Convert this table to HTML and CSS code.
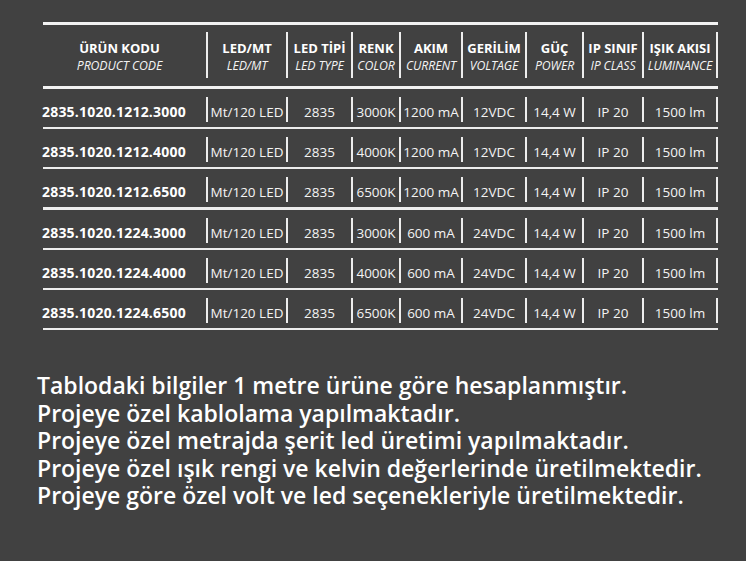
FILE: index.html
```html
<!DOCTYPE html>
<html lang="tr">
<head>
<meta charset="utf-8">
<title>LED Tablo</title>
<link rel="stylesheet" href="styles.css">
</head>
<body>
<div class="sheet">
  <div class="table">
    <div class="row head">
      <div class="cell code"><b>ÜRÜN KODU</b><i>PRODUCT CODE</i></div>
      <div class="cell"><b>LED/MT</b><i>LED/MT</i></div>
      <div class="cell"><b>LED TİPİ</b><i>LED TYPE</i></div>
      <div class="cell"><b>RENK</b><i>COLOR</i></div>
      <div class="cell"><b>AKIM</b><i>CURRENT</i></div>
      <div class="cell"><b>GERİLİM</b><i>VOLTAGE</i></div>
      <div class="cell"><b>GÜÇ</b><i>POWER</i></div>
      <div class="cell"><b>IP SINIF</b><i>IP CLASS</i></div>
      <div class="cell last"><b>IŞIK AKISI</b><i>LUMINANCE</i></div>
    </div>
    <div class="row">
      <div class="cell code">2835.1020.1212.3000</div>
      <div class="cell">Mt/120 LED</div>
      <div class="cell">2835</div>
      <div class="cell">3000K</div>
      <div class="cell">1200 mA</div>
      <div class="cell">12VDC</div>
      <div class="cell">14,4 W</div>
      <div class="cell">IP 20</div>
      <div class="cell last">1500 lm</div>
    </div>
    <div class="row">
      <div class="cell code">2835.1020.1212.4000</div>
      <div class="cell">Mt/120 LED</div>
      <div class="cell">2835</div>
      <div class="cell">4000K</div>
      <div class="cell">1200 mA</div>
      <div class="cell">12VDC</div>
      <div class="cell">14,4 W</div>
      <div class="cell">IP 20</div>
      <div class="cell last">1500 lm</div>
    </div>
    <div class="row group-end">
      <div class="cell code">2835.1020.1212.6500</div>
      <div class="cell">Mt/120 LED</div>
      <div class="cell">2835</div>
      <div class="cell">6500K</div>
      <div class="cell">1200 mA</div>
      <div class="cell">12VDC</div>
      <div class="cell">14,4 W</div>
      <div class="cell">IP 20</div>
      <div class="cell last">1500 lm</div>
    </div>
    <div class="row">
      <div class="cell code">2835.1020.1224.3000</div>
      <div class="cell">Mt/120 LED</div>
      <div class="cell">2835</div>
      <div class="cell">3000K</div>
      <div class="cell">600 mA</div>
      <div class="cell">24VDC</div>
      <div class="cell">14,4 W</div>
      <div class="cell">IP 20</div>
      <div class="cell last">1500 lm</div>
    </div>
    <div class="row">
      <div class="cell code">2835.1020.1224.4000</div>
      <div class="cell">Mt/120 LED</div>
      <div class="cell">2835</div>
      <div class="cell">4000K</div>
      <div class="cell">600 mA</div>
      <div class="cell">24VDC</div>
      <div class="cell">14,4 W</div>
      <div class="cell">IP 20</div>
      <div class="cell last">1500 lm</div>
    </div>
    <div class="row">
      <div class="cell code">2835.1020.1224.6500</div>
      <div class="cell">Mt/120 LED</div>
      <div class="cell">2835</div>
      <div class="cell">6500K</div>
      <div class="cell">600 mA</div>
      <div class="cell">24VDC</div>
      <div class="cell">14,4 W</div>
      <div class="cell">IP 20</div>
      <div class="cell last">1500 lm</div>
    </div>
  </div>
  <div class="notes">
    <p>Tablodaki bilgiler 1 metre ürüne göre hesaplanmıştır.</p>
    <p>Projeye özel kablolama yapılmaktadır.</p>
    <p>Projeye özel metrajda şerit led üretimi yapılmaktadır.</p>
    <p>Projeye özel ışık rengi ve kelvin değerlerinde üretilmektedir.</p>
    <p>Projeye göre özel volt ve led seçenekleriyle üretilmektedir.</p>
  </div>
</div>
</body>
</html>
```
FILE: styles.css
```css
html, body {
  margin: 0;
  padding: 0;
}
body {
  background: #414141;
  width: 746px;
  height: 561px;
  overflow: hidden;
  font-family: "Open Sans", "Noto Sans", sans-serif;
  color: #ffffff;
}
.sheet {
  padding-top: 22px;
}
.table {
  margin-left: 43px;
  width: 675px;
  border-top: 3px solid #f2f2f2;
}
.row {
  display: grid;
  grid-template-columns: 163px 80px 65px 48px 62px 64px 57px 60px 76px;
  height: 40px;
  box-sizing: border-box;
  border-bottom: 2px solid #ededed;
}
.row.group-end {
  height: 41px;
  border-bottom-width: 3px;
}
.row.head {
  height: 64px;
  padding: 7px 0 8px;
  border-bottom: 3px solid #f2f2f2;
}
.cell {
  box-sizing: border-box;
  border-left: 2px solid #ededed;
  margin-top: 8px;
  height: 25px;
  padding-top: 4px;
  display: flex;
  align-items: center;
  justify-content: center;
  font-size: 13.5px;
  white-space: nowrap;
  color: #f4f4f4;
}
.cell.code {
  border-left: none;
  justify-content: flex-start;
  margin-left: -1px;
  font-weight: 700;
  font-size: 14px;
  letter-spacing: 0.2px;
  color: #ffffff;
}
.cell.last {
  border-right: 2px solid #ededed;
}
.head .cell {
  margin-top: 0;
  height: 46px;
  padding-top: 3px;
  flex-direction: column;
  justify-content: center;
  align-items: center;
}
.head .cell.code {
  margin-left: 0;
  letter-spacing: 0;
  padding-right: 10px;
}
.head b {
  font-weight: 700;
  font-size: 13px;
  line-height: 17px;
  color: #ffffff;
}
.head i {
  font-style: italic;
  font-weight: 400;
  font-size: 12.3px;
  line-height: 17px;
  letter-spacing: -0.1px;
  color: #f4f4f4;
}
.notes {
  margin: 42px 0 0 37px;
  font-size: 23px;
  font-weight: 600;
  line-height: 27.6px;
  color: #ffffff;
}
.notes p {
  margin: 0;
  white-space: nowrap;
}
```
